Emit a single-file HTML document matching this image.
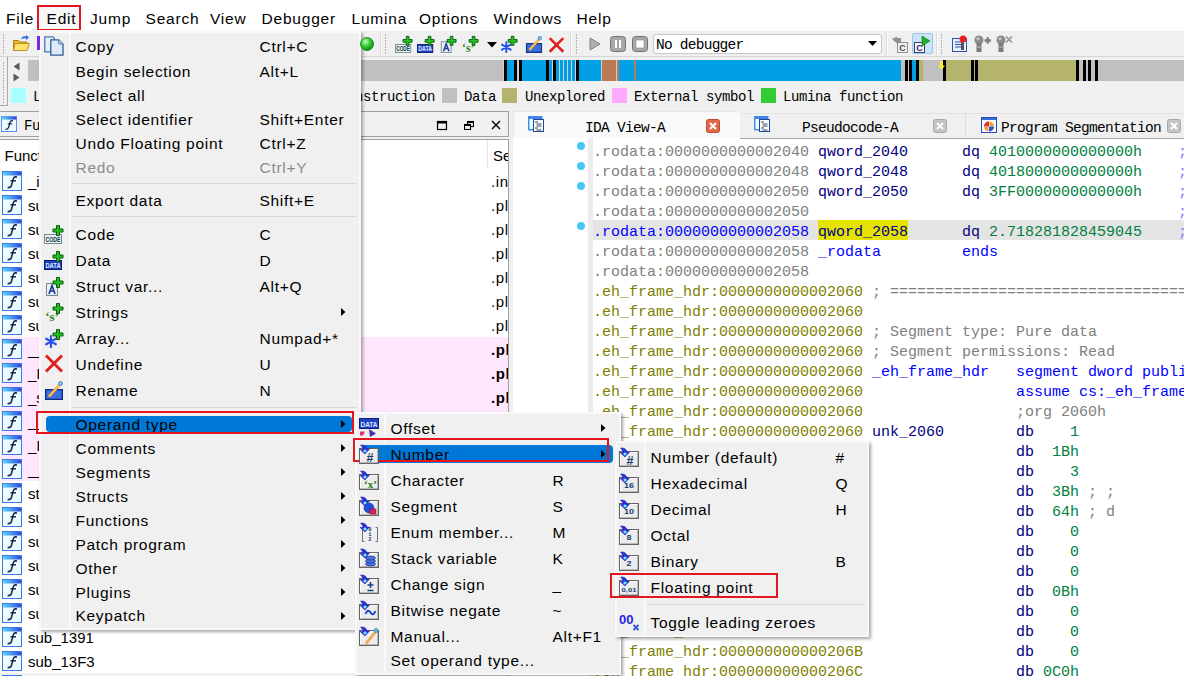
<!DOCTYPE html>
<html><head><meta charset="utf-8"><style>
html,body{margin:0;padding:0;}
body{width:1184px;height:676px;overflow:hidden;position:relative;background:#f0f0f0;font-family:'Liberation Sans', sans-serif;}
.t{position:absolute;white-space:pre;}
.r{position:absolute;}
</style></head><body>
<svg width="0" height="0" style="position:absolute"><defs><linearGradient id="fg" x1="0" y1="0" x2="1" y2="0"><stop offset="0" stop-color="#5fd8f8"/><stop offset="1" stop-color="#3048d8"/></linearGradient>
<symbol id="fn" viewBox="0 0 20 20"><rect x="0.5" y="0.5" width="19" height="19" fill="#eafcff" stroke="#3a7ae6"/><rect x="1" y="1" width="18" height="3.5" fill="url(#fg)"/>
<path d="M15 6.2 C13 5.4 11.8 6 11.2 8.2 L9.4 14.6 C8.9 16.3 8 16.8 5.6 16.6" stroke="#1c2448" stroke-width="1.6" fill="none"/><path d="M8.4 9.8 H14" stroke="#1c2448" stroke-width="1.4"/></symbol>
<linearGradient id="gball" cx="0.35" cy="0.3" r="0.7"><stop offset="0" stop-color="#aef0a0"/><stop offset="1" stop-color="#10a010"/></linearGradient>
<radialGradient id="rball" cx="0.38" cy="0.32" r="0.7"><stop offset="0" stop-color="#c8ffc0"/><stop offset="0.45" stop-color="#40d040"/><stop offset="1" stop-color="#089008"/></radialGradient>
<symbol id="plus" viewBox="0 0 20 20"><path d="M12.5 1.5h3v3.5h3.5v3h-3.5v3.5h-3v-3.5h-3.5v-3h3.5z" fill="#22c022" stroke="#0a5a0a" stroke-width="1"/></symbol>
<symbol id="i_copy" viewBox="0 0 20 20"><path d="M0.8 0.8h8l1.5 1.5v13.5h-9.5z" fill="#e6f0fa" stroke="#4a78b0" stroke-width="1.3"/><path d="M6.8 3.8h8l4.2 4.2v11.2h-12.2z" fill="#dfeaf8" stroke="#2e5e9c" stroke-width="1.3"/><path d="M14.8 3.8v4.2h4.2" fill="#c8d8ec" stroke="#2e5e9c" stroke-width="0.8"/></symbol>
<symbol id="i_code" viewBox="0 0 20 20"><rect x="0.5" y="10.5" width="17" height="9" fill="#e8eef4" stroke="#7a8890"/><text x="9" y="18.3" font-family="'Liberation Sans'" font-size="7.5" font-weight="bold" fill="#0a3a48" text-anchor="middle" textLength="15" lengthAdjust="spacingAndGlyphs">CODE</text><use href="#plus"/></symbol>
<symbol id="i_data" viewBox="0 0 20 20"><rect x="0.5" y="10.5" width="17" height="9" fill="#1840c0" stroke="#0a1a70"/><text x="9" y="18.3" font-family="'Liberation Sans'" font-size="7.5" font-weight="bold" fill="#e0f0ff" text-anchor="middle" textLength="15" lengthAdjust="spacingAndGlyphs">DATA</text><use href="#plus"/></symbol>
<symbol id="i_struct" viewBox="0 0 20 20"><rect x="2.5" y="7.5" width="11" height="12" fill="#e8eef6" stroke="#7a8896"/><path d="M5 18 L8 9.5 L11 18 M6 15h4" stroke="#1a3c90" stroke-width="1.6" fill="none"/><use href="#plus"/></symbol>
<symbol id="i_str" viewBox="0 0 20 20"><text x="8" y="19" font-family="'Liberation Serif'" font-size="13" font-weight="bold" fill="#2e8a1a" text-anchor="middle">‘s’</text><use href="#plus"/></symbol>
<symbol id="i_arr" viewBox="0 0 20 20"><g stroke="#2850e8" stroke-width="2.2" stroke-linecap="round"><path d="M7 8v11M2.2 10.7l9.6 5.6M2.2 16.3l9.6-5.6"/></g><use href="#plus"/></symbol>
<symbol id="i_undef" viewBox="0 0 20 20"><path d="M2 2.5 L18 18.5 M18 2.5 L2 18.5" stroke="#e02020" stroke-width="3"/></symbol>
<symbol id="i_ren" viewBox="0 0 20 20"><rect x="1.5" y="9.5" width="17" height="10" fill="#2858c8" stroke="#0a2a80"/><rect x="3" y="11" width="14" height="7" fill="#3a70e0"/><path d="M5 16.5 L15.5 5" stroke="#f0a030" stroke-width="2.8"/><path d="M5 16.5 L15.5 5" stroke="#ffe080" stroke-width="1"/><circle cx="16.5" cy="3.5" r="2" fill="#7ac0f0" stroke="#3a80c0" stroke-width="0.8"/></symbol>
<symbol id="barr" viewBox="0 0 20 20"><path d="M1.5 1 C5 0.5 7.5 2 8 5 L10.5 5 L6 10 L1 5.5 L4 5.5 C3.8 3.8 3 2.5 1.5 1z" fill="#2a30e0" stroke="#1818a0" stroke-width="0.5"/><path d="M6 5.5 L6 8.5 M4.5 7 L7.5 7" stroke="#70ffff" stroke-width="1.3"/></symbol>
<symbol id="box" viewBox="0 0 20 20"><rect x="0.7" y="4.7" width="18.6" height="14.6" fill="#ececec" stroke="#5e5e5e" stroke-width="1.3"/><path d="M1.5 18.5V5.5H18.5" stroke="#fcfcfc" fill="none" stroke-width="1"/></symbol>
<symbol id="o_offset" viewBox="0 0 20 20"><rect x="0.5" y="0.5" width="19" height="10" fill="#2040c0" stroke="#102080"/><text x="10" y="8.8" font-family="'Liberation Sans'" font-size="8" font-weight="bold" fill="#d8e8ff" text-anchor="middle" textLength="17" lengthAdjust="spacingAndGlyphs">DATA</text><path d="M1 13.5h5l-2 4h-3z" fill="#e03070"/><path d="M10 11 L17 15.5 L11 19z" fill="#4030b0"/></symbol>
<symbol id="o_num" viewBox="0 0 20 20"><use href="#box"/><text x="11" y="17.5" font-family="Liberation Sans" font-size="12.5" font-weight="bold" fill="#1a3a6a" text-anchor="middle">#</text><use href="#barr"/></symbol>
<symbol id="o_chr" viewBox="0 0 20 20"><use href="#box"/><text x="11.5" y="18" font-family="'Liberation Serif'" font-size="11" font-weight="bold" fill="#1a7a1a" text-anchor="middle">‘x’</text><use href="#barr"/></symbol>
<symbol id="o_seg" viewBox="0 0 20 20"><use href="#box"/><circle cx="10" cy="12" r="5" fill="#2050d8" stroke="#102a90" stroke-width="0.6"/><rect x="11" y="13" width="6" height="5" fill="#e02060" stroke="#901030" stroke-width="0.6"/><use href="#barr"/></symbol>
<symbol id="o_enum" viewBox="0 0 20 20"><path d="M5.5 5.5h-2v14h2M16.5 5.5h2v14h-2" fill="none" stroke="#707070"/><text x="11" y="9" font-family="'Liberation Mono'" font-size="5.5" font-weight="bold" fill="#203a70" text-anchor="middle">0</text><text x="11" y="14" font-family="'Liberation Mono'" font-size="5.5" font-weight="bold" fill="#203a70" text-anchor="middle">1</text><text x="11" y="19" font-family="'Liberation Mono'" font-size="5.5" font-weight="bold" fill="#203a70" text-anchor="middle">2</text><use href="#barr"/></symbol>
<symbol id="o_stack" viewBox="0 0 20 20"><use href="#box"/><g fill="#4a70e0" stroke="#1a3090" stroke-width="0.7"><ellipse cx="11.5" cy="16" rx="5" ry="2"/><ellipse cx="11.5" cy="13" rx="5" ry="2"/><ellipse cx="11.5" cy="10" rx="5" ry="2"/></g><use href="#barr"/></symbol>
<symbol id="o_sign" viewBox="0 0 20 20"><use href="#box"/><path d="M11.5 8v6M8.5 11h6M8.5 16.5h6" stroke="#1a3a8a" stroke-width="1.5"/><use href="#barr"/></symbol>
<symbol id="o_neg" viewBox="0 0 20 20"><use href="#box"/><path d="M6.5 14 C8 10 10 10 11.5 12.5 C13 15 15 15 16.5 11" stroke="#2040d0" stroke-width="2" fill="none"/><use href="#barr"/></symbol>
<symbol id="o_man" viewBox="0 0 20 20"><use href="#box"/><path d="M7 17.5 L16.5 6" stroke="#e89030" stroke-width="2.6"/><path d="M7 17.5 L16.5 6" stroke="#ffd080" stroke-width="0.9"/><circle cx="17" cy="4.5" r="2" fill="#6ab8e8" stroke="#3a80c0" stroke-width="0.7"/><use href="#barr"/></symbol>
<symbol id="n_16" viewBox="0 0 20 20"><use href="#box"/><text x="10" y="15" font-family="Liberation Sans" font-size="8" font-weight="bold" fill="#123a72" text-anchor="middle" textLength="10" lengthAdjust="spacingAndGlyphs">16</text><use href="#barr"/></symbol>
<symbol id="n_10" viewBox="0 0 20 20"><use href="#box"/><text x="10" y="15" font-family="Liberation Sans" font-size="8" font-weight="bold" fill="#123a72" text-anchor="middle" textLength="10" lengthAdjust="spacingAndGlyphs">10</text><use href="#barr"/></symbol>
<symbol id="n_8" viewBox="0 0 20 20"><use href="#box"/><text x="10" y="15" font-family="Liberation Sans" font-size="7" font-weight="bold" fill="#123a72" text-anchor="middle" textLength="5" lengthAdjust="spacingAndGlyphs">8</text><use href="#barr"/></symbol>
<symbol id="n_2" viewBox="0 0 20 20"><use href="#box"/><text x="10" y="15" font-family="Liberation Sans" font-size="7" font-weight="bold" fill="#123a72" text-anchor="middle" textLength="5" lengthAdjust="spacingAndGlyphs">2</text><use href="#barr"/></symbol>
<symbol id="n_fl" viewBox="0 0 20 20"><use href="#box"/><text x="10" y="15.5" font-family="Liberation Sans" font-size="6" font-weight="bold" fill="#123a72" text-anchor="middle" textLength="15" lengthAdjust="spacingAndGlyphs">0,01</text><use href="#barr"/></symbol>
<symbol id="n_tog" viewBox="0 0 20 20"><text x="0" y="11.5" font-family="Liberation Sans" font-size="12.5" font-weight="bold" fill="#2828e0" textLength="14.5" lengthAdjust="spacingAndGlyphs">00</text><path d="M14.5 13l5 5M19.5 13l-5 5" stroke="#3a50e0" stroke-width="1.8"/></symbol>
<symbol id="tabicon" viewBox="0 0 16 16"><rect x="0.7" y="0.7" width="13" height="13" fill="#e8fcff" stroke="#3a8ae8" stroke-width="1.4"/><rect x="1" y="1" width="12.5" height="2" fill="#4a80e8"/><rect x="5.5" y="3.5" width="10" height="12" fill="#f8fbff" stroke="#1a4a90"/><path d="M7 6h3M8.5 8h5M8.5 10h5M7 12h3M8.5 14h5" stroke="#404850" stroke-width="1"/></symbol>
<symbol id="segicon" viewBox="0 0 16 16"><rect x="0.5" y="0.5" width="15" height="15" fill="#f8f8ff" stroke="#2a4ac0"/><rect x="1" y="1" width="14" height="2" fill="#3a6ad8"/><circle cx="8" cy="9.5" r="5" fill="#f0a020"/><path d="M8 4.5v10M3 9.5h10" stroke="#fff" stroke-width="1.2"/><path d="M8 4.5 A5 5 0 0 0 3 9.5 H8z" fill="#e03030"/><path d="M8 14.5 A5 5 0 0 0 13 9.5 H8z" fill="#3050d0"/></symbol>
</defs></svg>
<div class="r" style="left:0px;top:0px;width:1184px;height:30px;background:#ffffff;"></div><div class="r" style="left:37px;top:5px;width:44px;height:25.5px;background:#f7f7f7;box-sizing:border-box;border:2px solid #e3151e;"></div><div class="t" style="left:6px;top:7.83px;font-size:15.5px;line-height:22px;color:#000;font-family:'Liberation Sans', sans-serif;letter-spacing:0.8px;">File</div><div class="t" style="left:46.5px;top:7.83px;font-size:15.5px;line-height:22px;color:#000;font-family:'Liberation Sans', sans-serif;letter-spacing:0.8px;">Edit</div><div class="t" style="left:90px;top:7.83px;font-size:15.5px;line-height:22px;color:#000;font-family:'Liberation Sans', sans-serif;letter-spacing:0.8px;">Jump</div><div class="t" style="left:145.5px;top:7.83px;font-size:15.5px;line-height:22px;color:#000;font-family:'Liberation Sans', sans-serif;letter-spacing:0.8px;">Search</div><div class="t" style="left:210px;top:7.83px;font-size:15.5px;line-height:22px;color:#000;font-family:'Liberation Sans', sans-serif;letter-spacing:0.8px;">View</div><div class="t" style="left:261.5px;top:7.83px;font-size:15.5px;line-height:22px;color:#000;font-family:'Liberation Sans', sans-serif;letter-spacing:0.8px;">Debugger</div><div class="t" style="left:351.5px;top:7.83px;font-size:15.5px;line-height:22px;color:#000;font-family:'Liberation Sans', sans-serif;letter-spacing:0.8px;">Lumina</div><div class="t" style="left:419px;top:7.83px;font-size:15.5px;line-height:22px;color:#000;font-family:'Liberation Sans', sans-serif;letter-spacing:0.8px;">Options</div><div class="t" style="left:493.5px;top:7.83px;font-size:15.5px;line-height:22px;color:#000;font-family:'Liberation Sans', sans-serif;letter-spacing:0.8px;">Windows</div><div class="t" style="left:576.5px;top:7.83px;font-size:15.5px;line-height:22px;color:#000;font-family:'Liberation Sans', sans-serif;letter-spacing:0.8px;">Help</div><div class="r" style="left:0px;top:30px;width:1184px;height:27px;background:#f0f0f0;box-sizing:border-box;border-top:1px solid #fbfbfb;border-bottom:1px solid #d9d9d9;"></div><div class="r" style="left:0px;top:57px;width:1184px;height:49px;background:#f0f0f0;"></div><div class="r" style="left:0px;top:57px;width:8px;height:49px;background:#f0f0f0;box-sizing:border-box;border-right:1px solid #a8a8a8;border-bottom:1px solid #a8a8a8;"></div><div class="r" style="left:0px;top:56px;width:1184px;height:1px;background:#d4d4d4;"></div><div class="r" style="left:2.5px;top:62px;width:1.2px;height:1.5px;background:#b4b4b4;"></div><div class="r" style="left:2.5px;top:65px;width:1.2px;height:1.5px;background:#b4b4b4;"></div><div class="r" style="left:2.5px;top:68px;width:1.2px;height:1.5px;background:#b4b4b4;"></div><div class="r" style="left:2.5px;top:71px;width:1.2px;height:1.5px;background:#b4b4b4;"></div><div class="r" style="left:2.5px;top:74px;width:1.2px;height:1.5px;background:#b4b4b4;"></div><div class="r" style="left:2.5px;top:77px;width:1.2px;height:1.5px;background:#b4b4b4;"></div><div class="r" style="left:2.5px;top:80px;width:1.2px;height:1.5px;background:#b4b4b4;"></div><div class="r" style="left:2.5px;top:83px;width:1.2px;height:1.5px;background:#b4b4b4;"></div><div class="r" style="left:2.5px;top:86px;width:1.2px;height:1.5px;background:#b4b4b4;"></div><div class="r" style="left:2.5px;top:89px;width:1.2px;height:1.5px;background:#b4b4b4;"></div><div class="r" style="left:2.5px;top:92px;width:1.2px;height:1.5px;background:#b4b4b4;"></div><div class="r" style="left:2.5px;top:95px;width:1.2px;height:1.5px;background:#b4b4b4;"></div><div class="r" style="left:2.5px;top:98px;width:1.2px;height:1.5px;background:#b4b4b4;"></div><div class="r" style="left:2.5px;top:101px;width:1.2px;height:1.5px;background:#b4b4b4;"></div><svg class="r" style="left:13px;top:62px;" width="7" height="9" viewBox="0 0 7 9"><path d="M6.5 0.5 L0.5 4.5 L6.5 8.5z" fill="#5a5a5a"/></svg><svg class="r" style="left:13px;top:72.5px;" width="7" height="9" viewBox="0 0 7 9"><path d="M0.5 0.5 L6.5 4.5 L0.5 8.5z" fill="#5a5a5a"/></svg><div class="r" style="left:28px;top:60px;width:475px;height:21px;background:#c0c0c0;"></div><div class="r" style="left:503px;top:60px;width:1px;height:21px;background:#d0d0d0;"></div><div class="r" style="left:504px;top:60px;width:3px;height:21px;background:#000;"></div><div class="r" style="left:507px;top:60px;width:7px;height:21px;background:#00a0e6;"></div><div class="r" style="left:514px;top:60px;width:3px;height:21px;background:#000;"></div><div class="r" style="left:517px;top:60px;width:2px;height:21px;background:#d0d0d0;"></div><div class="r" style="left:519px;top:60px;width:3px;height:21px;background:#000;"></div><div class="r" style="left:522px;top:60px;width:24px;height:21px;background:#00a0e6;"></div><div class="r" style="left:546px;top:60px;width:3px;height:21px;background:#000;"></div><div class="r" style="left:549px;top:60px;width:3px;height:21px;background:#00a0e6;"></div><div class="r" style="left:552px;top:60px;width:1px;height:21px;background:#d0d0d0;"></div><div class="r" style="left:553px;top:60px;width:3px;height:21px;background:#000;"></div><div class="r" style="left:556px;top:60px;width:3px;height:21px;background:#00a0e6;"></div><div class="r" style="left:559px;top:60px;width:1px;height:21px;background:#d0d0d0;"></div><div class="r" style="left:560px;top:60px;width:3px;height:21px;background:#00a0e6;"></div><div class="r" style="left:563px;top:60px;width:1px;height:21px;background:#d0d0d0;"></div><div class="r" style="left:564px;top:60px;width:3px;height:21px;background:#00a0e6;"></div><div class="r" style="left:567px;top:60px;width:1px;height:21px;background:#d0d0d0;"></div><div class="r" style="left:568px;top:60px;width:3px;height:21px;background:#00a0e6;"></div><div class="r" style="left:571px;top:60px;width:1px;height:21px;background:#d0d0d0;"></div><div class="r" style="left:572px;top:60px;width:3px;height:21px;background:#00a0e6;"></div><div class="r" style="left:575px;top:60px;width:1px;height:21px;background:#d0d0d0;"></div><div class="r" style="left:576px;top:60px;width:3px;height:21px;background:#000;"></div><div class="r" style="left:579px;top:60px;width:22px;height:21px;background:#00a0e6;"></div><div class="r" style="left:601px;top:60px;width:1px;height:21px;background:#d0d0d0;"></div><div class="r" style="left:602px;top:60px;width:14px;height:21px;background:#b87a57;"></div><div class="r" style="left:616px;top:60px;width:1px;height:21px;background:#d0d0d0;"></div><div class="r" style="left:617px;top:60px;width:2px;height:21px;background:#b87a57;"></div><div class="r" style="left:619px;top:60px;width:15px;height:21px;background:#00a0e6;"></div><div class="r" style="left:634px;top:60px;width:2px;height:21px;background:#b87a57;"></div><div class="r" style="left:636px;top:60px;width:265px;height:21px;background:#00a0e6;"></div><div class="r" style="left:901px;top:60px;width:4px;height:21px;background:#c0c0c0;"></div><div class="r" style="left:905px;top:60px;width:3px;height:21px;background:#000;"></div><div class="r" style="left:908px;top:60px;width:1px;height:21px;background:#c0c0c0;"></div><div class="r" style="left:909px;top:60px;width:3px;height:21px;background:#000;"></div><div class="r" style="left:912px;top:60px;width:4px;height:21px;background:#00a0e6;"></div><div class="r" style="left:916px;top:60px;width:3px;height:21px;background:#000;"></div><div class="r" style="left:919px;top:60px;width:4px;height:21px;background:#b4b46c;"></div><div class="r" style="left:923px;top:60px;width:20px;height:21px;background:#c0c0c0;"></div><div class="r" style="left:943px;top:60px;width:3px;height:21px;background:#000;"></div><div class="r" style="left:946px;top:60px;width:25px;height:21px;background:#b4b46c;"></div><div class="r" style="left:971px;top:60px;width:3px;height:21px;background:#000;"></div><div class="r" style="left:974px;top:60px;width:1px;height:21px;background:#b4b46c;"></div><div class="r" style="left:975px;top:60px;width:3px;height:21px;background:#000;"></div><div class="r" style="left:978px;top:60px;width:98px;height:21px;background:#b4b46c;"></div><div class="r" style="left:1076px;top:60px;width:3px;height:21px;background:#000;"></div><div class="r" style="left:1079px;top:60px;width:4px;height:21px;background:#c0c0c0;"></div><div class="r" style="left:1083px;top:60px;width:3px;height:21px;background:#000;"></div><div class="r" style="left:1086px;top:60px;width:2px;height:21px;background:#c0c0c0;"></div><div class="r" style="left:1088px;top:60px;width:3px;height:21px;background:#000;"></div><div class="r" style="left:1091px;top:60px;width:4px;height:21px;background:#c0c0c0;"></div><div class="r" style="left:1095px;top:60px;width:3px;height:21px;background:#000;"></div><div class="r" style="left:1098px;top:60px;width:86px;height:21px;background:#c0c0c0;"></div><svg class="r" style="left:938px;top:61px;" width="7" height="9" viewBox="0 0 7 9"><path d="M2 0h3v4.5h2l-3.5 4.5l-3.5-4.5h2z" fill="#f8f040"/></svg><div class="r" style="left:11px;top:88px;width:15px;height:15px;background:#a8ffff;"></div><div class="r" style="left:442px;top:88px;width:15px;height:15px;background:#c0c0c0;"></div><div class="r" style="left:502px;top:88px;width:15px;height:15px;background:#b4b46c;"></div><div class="r" style="left:612px;top:88px;width:15px;height:15px;background:#ffaaff;"></div><div class="r" style="left:761px;top:88px;width:15px;height:15px;background:#33cc33;"></div><div class="t" style="left:33px;top:86.77px;font-size:14px;line-height:20px;color:#000;font-family:'Liberation Mono', monospace;letter-spacing:-0.4px;">Library function</div><div class="t" style="left:347px;top:86.77px;font-size:14px;line-height:20px;color:#000;font-family:'Liberation Mono', monospace;letter-spacing:-0.4px;">Instruction</div><div class="t" style="left:464px;top:86.77px;font-size:14px;line-height:20px;color:#000;font-family:'Liberation Mono', monospace;letter-spacing:-0.4px;">Data</div><div class="t" style="left:525px;top:86.77px;font-size:14px;line-height:20px;color:#000;font-family:'Liberation Mono', monospace;letter-spacing:-0.4px;">Unexplored</div><div class="t" style="left:634px;top:86.77px;font-size:14px;line-height:20px;color:#000;font-family:'Liberation Mono', monospace;letter-spacing:-0.4px;">External symbol</div><div class="t" style="left:783px;top:86.77px;font-size:14px;line-height:20px;color:#000;font-family:'Liberation Mono', monospace;letter-spacing:-0.4px;">Lumina function</div><div class="r" style="left:0px;top:111px;width:509px;height:26px;background:#f0f0f0;box-sizing:border-box;border-top:1px solid #a0a0a0;border-bottom:1px solid #a0a0a0;border-right:1px solid #a0a0a0;"></div><div class="t" style="left:24px;top:116.27px;font-size:14px;line-height:20px;color:#000;font-family:'Liberation Mono', monospace;letter-spacing:-0.4px;">Functions</div><div class="r" style="left:0px;top:139px;width:509px;height:537px;background:#ffffff;box-sizing:border-box;border-top:1px solid #a0a0a0;border-right:1px solid #a0a0a0;"></div><div class="t" style="left:4.5px;top:145.30px;font-size:15px;line-height:21px;color:#000;font-family:'Liberation Sans', sans-serif;">Function name</div><div class="r" style="left:487px;top:140px;width:1px;height:28px;background:#e5e5e5;"></div><div class="t" style="left:493px;top:145.30px;font-size:15px;line-height:21px;color:#000;font-family:'Liberation Sans', sans-serif;">Segment</div><div class="r" style="left:509px;top:111px;width:4px;height:565px;background:#f0f0f0;"></div><div class="r" style="left:0;top:0;width:1184px;height:676px;clip-path:inset(140px 676px 0px 1px);"><svg class="r" style="left:2px;top:171px;" width="20" height="20" viewBox="0 0 20 20"><use href="#fn"/></svg><div class="t" style="left:28px;top:171.30px;font-size:15px;line-height:21px;color:#000;font-family:'Liberation Sans', sans-serif;">_init_proc</div><div class="t" style="left:491px;top:171.30px;font-size:15px;line-height:21px;color:#000;font-family:'Liberation Sans', sans-serif;letter-spacing:0.6px;">.init</div><svg class="r" style="left:2px;top:195px;" width="20" height="20" viewBox="0 0 20 20"><use href="#fn"/></svg><div class="t" style="left:28px;top:195.30px;font-size:15px;line-height:21px;color:#000;font-family:'Liberation Sans', sans-serif;">sub_1020</div><div class="t" style="left:491px;top:195.30px;font-size:15px;line-height:21px;color:#000;font-family:'Liberation Sans', sans-serif;letter-spacing:0.6px;">.plt</div><svg class="r" style="left:2px;top:219px;" width="20" height="20" viewBox="0 0 20 20"><use href="#fn"/></svg><div class="t" style="left:28px;top:219.30px;font-size:15px;line-height:21px;color:#000;font-family:'Liberation Sans', sans-serif;">sub_1030</div><div class="t" style="left:491px;top:219.30px;font-size:15px;line-height:21px;color:#000;font-family:'Liberation Sans', sans-serif;letter-spacing:0.6px;">.plt</div><svg class="r" style="left:2px;top:243px;" width="20" height="20" viewBox="0 0 20 20"><use href="#fn"/></svg><div class="t" style="left:28px;top:243.30px;font-size:15px;line-height:21px;color:#000;font-family:'Liberation Sans', sans-serif;">sub_1040</div><div class="t" style="left:491px;top:243.30px;font-size:15px;line-height:21px;color:#000;font-family:'Liberation Sans', sans-serif;letter-spacing:0.6px;">.plt</div><svg class="r" style="left:2px;top:267px;" width="20" height="20" viewBox="0 0 20 20"><use href="#fn"/></svg><div class="t" style="left:28px;top:267.30px;font-size:15px;line-height:21px;color:#000;font-family:'Liberation Sans', sans-serif;">sub_1050</div><div class="t" style="left:491px;top:267.30px;font-size:15px;line-height:21px;color:#000;font-family:'Liberation Sans', sans-serif;letter-spacing:0.6px;">.plt</div><svg class="r" style="left:2px;top:291px;" width="20" height="20" viewBox="0 0 20 20"><use href="#fn"/></svg><div class="t" style="left:28px;top:291.30px;font-size:15px;line-height:21px;color:#000;font-family:'Liberation Sans', sans-serif;">sub_1060</div><div class="t" style="left:491px;top:291.30px;font-size:15px;line-height:21px;color:#000;font-family:'Liberation Sans', sans-serif;letter-spacing:0.6px;">.plt</div><svg class="r" style="left:2px;top:315px;" width="20" height="20" viewBox="0 0 20 20"><use href="#fn"/></svg><div class="t" style="left:28px;top:315.30px;font-size:15px;line-height:21px;color:#000;font-family:'Liberation Sans', sans-serif;">sub_1070</div><div class="t" style="left:491px;top:315.30px;font-size:15px;line-height:21px;color:#000;font-family:'Liberation Sans', sans-serif;letter-spacing:0.6px;">.plt</div><div class="r" style="left:1px;top:337px;width:507px;height:24px;background:#ffe6ff;"></div><svg class="r" style="left:2px;top:339px;" width="20" height="20" viewBox="0 0 20 20"><use href="#fn"/></svg><div class="t" style="left:28px;top:339.30px;font-size:15px;line-height:21px;color:#000;font-family:'Liberation Sans', sans-serif;">__cxa_finalize</div><div class="t" style="left:491px;top:339.30px;font-size:15px;line-height:21px;color:#000;font-family:'Liberation Sans', sans-serif;letter-spacing:0.6px;font-weight:bold;">.plt.got</div><div class="r" style="left:1px;top:361px;width:507px;height:24px;background:#ffe6ff;"></div><svg class="r" style="left:2px;top:363px;" width="20" height="20" viewBox="0 0 20 20"><use href="#fn"/></svg><div class="t" style="left:28px;top:363.30px;font-size:15px;line-height:21px;color:#000;font-family:'Liberation Sans', sans-serif;">_ITM_deregisterTMCloneTable</div><div class="t" style="left:491px;top:363.30px;font-size:15px;line-height:21px;color:#000;font-family:'Liberation Sans', sans-serif;letter-spacing:0.6px;font-weight:bold;">.plt.got</div><div class="r" style="left:1px;top:385px;width:507px;height:24px;background:#ffe6ff;"></div><svg class="r" style="left:2px;top:387px;" width="20" height="20" viewBox="0 0 20 20"><use href="#fn"/></svg><div class="t" style="left:28px;top:387.30px;font-size:15px;line-height:21px;color:#000;font-family:'Liberation Sans', sans-serif;">_start</div><div class="t" style="left:491px;top:387.30px;font-size:15px;line-height:21px;color:#000;font-family:'Liberation Sans', sans-serif;letter-spacing:0.6px;font-weight:bold;">.plt.got</div><div class="r" style="left:1px;top:409px;width:507px;height:24px;background:#ffe6ff;"></div><svg class="r" style="left:2px;top:411px;" width="20" height="20" viewBox="0 0 20 20"><use href="#fn"/></svg><div class="t" style="left:28px;top:411.30px;font-size:15px;line-height:21px;color:#000;font-family:'Liberation Sans', sans-serif;">__gmon_start__</div><div class="t" style="left:491px;top:411.30px;font-size:15px;line-height:21px;color:#000;font-family:'Liberation Sans', sans-serif;letter-spacing:0.6px;font-weight:bold;">.plt.got</div><div class="r" style="left:1px;top:433px;width:507px;height:24px;background:#ffe6ff;"></div><svg class="r" style="left:2px;top:435px;" width="20" height="20" viewBox="0 0 20 20"><use href="#fn"/></svg><div class="t" style="left:28px;top:435.30px;font-size:15px;line-height:21px;color:#000;font-family:'Liberation Sans', sans-serif;">_ITM_registerTMCloneTable</div><div class="t" style="left:491px;top:435.30px;font-size:15px;line-height:21px;color:#000;font-family:'Liberation Sans', sans-serif;letter-spacing:0.6px;font-weight:bold;">.plt.got</div><div class="r" style="left:1px;top:457px;width:507px;height:24px;background:#ffe6ff;"></div><svg class="r" style="left:2px;top:459px;" width="20" height="20" viewBox="0 0 20 20"><use href="#fn"/></svg><div class="t" style="left:28px;top:459.30px;font-size:15px;line-height:21px;color:#000;font-family:'Liberation Sans', sans-serif;">__libc_start_main</div><div class="t" style="left:491px;top:459.30px;font-size:15px;line-height:21px;color:#000;font-family:'Liberation Sans', sans-serif;letter-spacing:0.6px;font-weight:bold;">.plt.got</div><svg class="r" style="left:2px;top:483px;" width="20" height="20" viewBox="0 0 20 20"><use href="#fn"/></svg><div class="t" style="left:28px;top:483.30px;font-size:15px;line-height:21px;color:#000;font-family:'Liberation Sans', sans-serif;">start</div><div class="t" style="left:491px;top:483.30px;font-size:15px;line-height:21px;color:#000;font-family:'Liberation Sans', sans-serif;letter-spacing:0.6px;">.text</div><svg class="r" style="left:2px;top:507px;" width="20" height="20" viewBox="0 0 20 20"><use href="#fn"/></svg><div class="t" style="left:28px;top:507.30px;font-size:15px;line-height:21px;color:#000;font-family:'Liberation Sans', sans-serif;">sub_1100</div><div class="t" style="left:491px;top:507.30px;font-size:15px;line-height:21px;color:#000;font-family:'Liberation Sans', sans-serif;letter-spacing:0.6px;">.text</div><svg class="r" style="left:2px;top:531px;" width="20" height="20" viewBox="0 0 20 20"><use href="#fn"/></svg><div class="t" style="left:28px;top:531.30px;font-size:15px;line-height:21px;color:#000;font-family:'Liberation Sans', sans-serif;">sub_1130</div><div class="t" style="left:491px;top:531.30px;font-size:15px;line-height:21px;color:#000;font-family:'Liberation Sans', sans-serif;letter-spacing:0.6px;">.text</div><svg class="r" style="left:2px;top:555px;" width="20" height="20" viewBox="0 0 20 20"><use href="#fn"/></svg><div class="t" style="left:28px;top:555.30px;font-size:15px;line-height:21px;color:#000;font-family:'Liberation Sans', sans-serif;">sub_1170</div><div class="t" style="left:491px;top:555.30px;font-size:15px;line-height:21px;color:#000;font-family:'Liberation Sans', sans-serif;letter-spacing:0.6px;">.text</div><svg class="r" style="left:2px;top:579px;" width="20" height="20" viewBox="0 0 20 20"><use href="#fn"/></svg><div class="t" style="left:28px;top:579.30px;font-size:15px;line-height:21px;color:#000;font-family:'Liberation Sans', sans-serif;">sub_11C0</div><div class="t" style="left:491px;top:579.30px;font-size:15px;line-height:21px;color:#000;font-family:'Liberation Sans', sans-serif;letter-spacing:0.6px;">.text</div><svg class="r" style="left:2px;top:603px;" width="20" height="20" viewBox="0 0 20 20"><use href="#fn"/></svg><div class="t" style="left:28px;top:603.30px;font-size:15px;line-height:21px;color:#000;font-family:'Liberation Sans', sans-serif;">sub_1249</div><div class="t" style="left:491px;top:603.30px;font-size:15px;line-height:21px;color:#000;font-family:'Liberation Sans', sans-serif;letter-spacing:0.6px;">.text</div><svg class="r" style="left:2px;top:627px;" width="20" height="20" viewBox="0 0 20 20"><use href="#fn"/></svg><div class="t" style="left:28px;top:627.30px;font-size:15px;line-height:21px;color:#000;font-family:'Liberation Sans', sans-serif;">sub_1391</div><div class="t" style="left:491px;top:627.30px;font-size:15px;line-height:21px;color:#000;font-family:'Liberation Sans', sans-serif;letter-spacing:0.6px;">.text</div><svg class="r" style="left:2px;top:651px;" width="20" height="20" viewBox="0 0 20 20"><use href="#fn"/></svg><div class="t" style="left:28px;top:651.30px;font-size:15px;line-height:21px;color:#000;font-family:'Liberation Sans', sans-serif;">sub_13F3</div><div class="t" style="left:491px;top:651.30px;font-size:15px;line-height:21px;color:#000;font-family:'Liberation Sans', sans-serif;letter-spacing:0.6px;">.text</div><div class="r" style="left:1px;top:673px;width:507px;height:24px;background:#f0f0f0;"></div><svg class="r" style="left:2px;top:675px;" width="20" height="20" viewBox="0 0 20 20"><use href="#fn"/></svg><div class="t" style="left:28px;top:675.30px;font-size:15px;line-height:21px;color:#000;font-family:'Liberation Sans', sans-serif;">sub_1450</div><div class="t" style="left:491px;top:675.30px;font-size:15px;line-height:21px;color:#000;font-family:'Liberation Sans', sans-serif;letter-spacing:0.6px;">.text</div></div><div class="r" style="left:508px;top:139px;width:1px;height:537px;background:#a0a0a0;"></div><div class="r" style="left:513px;top:111px;width:671px;height:27px;background:#f0f0f0;"></div><div class="r" style="left:513px;top:138px;width:671px;height:538px;background:#ffffff;"></div><div class="r" style="left:588px;top:138px;width:5px;height:538px;background:#ececec;"></div><div class="r" style="left:0;top:0;width:1184px;height:676px;clip-path:inset(138px 0px 0px 593px);"><div class="r" style="left:593px;top:220px;width:591px;height:20px;background:#e4e4e4;"></div><div class="r" style="left:818.0px;top:220px;width:90px;height:20px;background:#e4e400;"></div><div class="t" style="left:593.0px;top:141.51px;font-size:15px;line-height:21px;color:#808080;font-family:'Liberation Mono', monospace;">.rodata:0000000000002040</div><div class="t" style="left:593.0px;top:161.51px;font-size:15px;line-height:21px;color:#808080;font-family:'Liberation Mono', monospace;">.rodata:0000000000002048</div><div class="t" style="left:593.0px;top:181.51px;font-size:15px;line-height:21px;color:#808080;font-family:'Liberation Mono', monospace;">.rodata:0000000000002050</div><div class="t" style="left:593.0px;top:201.51px;font-size:15px;line-height:21px;color:#808080;font-family:'Liberation Mono', monospace;">.rodata:0000000000002050</div><div class="t" style="left:593.0px;top:221.51px;font-size:15px;line-height:21px;color:#0000ff;font-family:'Liberation Mono', monospace;">.rodata:0000000000002058</div><div class="t" style="left:593.0px;top:241.51px;font-size:15px;line-height:21px;color:#808080;font-family:'Liberation Mono', monospace;">.rodata:0000000000002058</div><div class="t" style="left:593.0px;top:261.51px;font-size:15px;line-height:21px;color:#808080;font-family:'Liberation Mono', monospace;">.rodata:0000000000002058</div><div class="t" style="left:593.0px;top:281.51px;font-size:15px;line-height:21px;color:#808000;font-family:'Liberation Mono', monospace;">.eh_frame_hdr:0000000000002060</div><div class="t" style="left:593.0px;top:301.51px;font-size:15px;line-height:21px;color:#808000;font-family:'Liberation Mono', monospace;">.eh_frame_hdr:0000000000002060</div><div class="t" style="left:593.0px;top:321.51px;font-size:15px;line-height:21px;color:#808000;font-family:'Liberation Mono', monospace;">.eh_frame_hdr:0000000000002060</div><div class="t" style="left:593.0px;top:341.51px;font-size:15px;line-height:21px;color:#808000;font-family:'Liberation Mono', monospace;">.eh_frame_hdr:0000000000002060</div><div class="t" style="left:593.0px;top:361.51px;font-size:15px;line-height:21px;color:#808000;font-family:'Liberation Mono', monospace;">.eh_frame_hdr:0000000000002060</div><div class="t" style="left:593.0px;top:381.51px;font-size:15px;line-height:21px;color:#808000;font-family:'Liberation Mono', monospace;">.eh_frame_hdr:0000000000002060</div><div class="t" style="left:593.0px;top:401.51px;font-size:15px;line-height:21px;color:#808000;font-family:'Liberation Mono', monospace;">.eh_frame_hdr:0000000000002060</div><div class="t" style="left:593.0px;top:421.51px;font-size:15px;line-height:21px;color:#808000;font-family:'Liberation Mono', monospace;">.eh_frame_hdr:0000000000002060</div><div class="t" style="left:593.0px;top:441.51px;font-size:15px;line-height:21px;color:#808000;font-family:'Liberation Mono', monospace;">.eh_frame_hdr:0000000000002061</div><div class="t" style="left:593.0px;top:461.51px;font-size:15px;line-height:21px;color:#808000;font-family:'Liberation Mono', monospace;">.eh_frame_hdr:0000000000002062</div><div class="t" style="left:593.0px;top:481.51px;font-size:15px;line-height:21px;color:#808000;font-family:'Liberation Mono', monospace;">.eh_frame_hdr:0000000000002063</div><div class="t" style="left:593.0px;top:501.51px;font-size:15px;line-height:21px;color:#808000;font-family:'Liberation Mono', monospace;">.eh_frame_hdr:0000000000002064</div><div class="t" style="left:593.0px;top:521.51px;font-size:15px;line-height:21px;color:#808000;font-family:'Liberation Mono', monospace;">.eh_frame_hdr:0000000000002065</div><div class="t" style="left:593.0px;top:541.51px;font-size:15px;line-height:21px;color:#808000;font-family:'Liberation Mono', monospace;">.eh_frame_hdr:0000000000002066</div><div class="t" style="left:593.0px;top:561.51px;font-size:15px;line-height:21px;color:#808000;font-family:'Liberation Mono', monospace;">.eh_frame_hdr:0000000000002067</div><div class="t" style="left:593.0px;top:581.51px;font-size:15px;line-height:21px;color:#808000;font-family:'Liberation Mono', monospace;">.eh_frame_hdr:0000000000002068</div><div class="t" style="left:593.0px;top:601.51px;font-size:15px;line-height:21px;color:#808000;font-family:'Liberation Mono', monospace;">.eh_frame_hdr:0000000000002069</div><div class="t" style="left:593.0px;top:621.51px;font-size:15px;line-height:21px;color:#808000;font-family:'Liberation Mono', monospace;">.eh_frame_hdr:000000000000206A</div><div class="t" style="left:593.0px;top:641.51px;font-size:15px;line-height:21px;color:#808000;font-family:'Liberation Mono', monospace;">.eh_frame_hdr:000000000000206B</div><div class="t" style="left:593.0px;top:661.51px;font-size:15px;line-height:21px;color:#808000;font-family:'Liberation Mono', monospace;">.eh_frame_hdr:000000000000206C</div><div class="t" style="left:818.0px;top:141.51px;font-size:15px;line-height:21px;color:#000080;font-family:'Liberation Mono', monospace;">qword_2040</div><div class="t" style="left:962.0px;top:141.51px;font-size:15px;line-height:21px;color:#000080;font-family:'Liberation Mono', monospace;">dq</div><div class="t" style="left:989.0px;top:141.51px;font-size:15px;line-height:21px;color:#008040;font-family:'Liberation Mono', monospace;">4010000000000000h</div><div class="t" style="left:1178.0px;top:141.51px;font-size:15px;line-height:21px;color:#8080ff;font-family:'Liberation Mono', monospace;">;</div><div class="t" style="left:818.0px;top:161.51px;font-size:15px;line-height:21px;color:#000080;font-family:'Liberation Mono', monospace;">qword_2048</div><div class="t" style="left:962.0px;top:161.51px;font-size:15px;line-height:21px;color:#000080;font-family:'Liberation Mono', monospace;">dq</div><div class="t" style="left:989.0px;top:161.51px;font-size:15px;line-height:21px;color:#008040;font-family:'Liberation Mono', monospace;">4018000000000000h</div><div class="t" style="left:1178.0px;top:161.51px;font-size:15px;line-height:21px;color:#8080ff;font-family:'Liberation Mono', monospace;">;</div><div class="t" style="left:818.0px;top:181.51px;font-size:15px;line-height:21px;color:#000080;font-family:'Liberation Mono', monospace;">qword_2050</div><div class="t" style="left:962.0px;top:181.51px;font-size:15px;line-height:21px;color:#000080;font-family:'Liberation Mono', monospace;">dq</div><div class="t" style="left:989.0px;top:181.51px;font-size:15px;line-height:21px;color:#008040;font-family:'Liberation Mono', monospace;">3FF0000000000000h</div><div class="t" style="left:1178.0px;top:181.51px;font-size:15px;line-height:21px;color:#8080ff;font-family:'Liberation Mono', monospace;">;</div><div class="t" style="left:1178.0px;top:201.51px;font-size:15px;line-height:21px;color:#8080ff;font-family:'Liberation Mono', monospace;">;</div><div class="t" style="left:818.0px;top:221.51px;font-size:15px;line-height:21px;color:#000080;font-family:'Liberation Mono', monospace;">qword_2058</div><div class="t" style="left:962.0px;top:221.51px;font-size:15px;line-height:21px;color:#000080;font-family:'Liberation Mono', monospace;">dq</div><div class="t" style="left:989.0px;top:221.51px;font-size:15px;line-height:21px;color:#008040;font-family:'Liberation Mono', monospace;">2.718281828459045</div><div class="t" style="left:1178.0px;top:221.51px;font-size:15px;line-height:21px;color:#8080ff;font-family:'Liberation Mono', monospace;">;</div><div class="t" style="left:818.0px;top:241.51px;font-size:15px;line-height:21px;color:#0000ff;font-family:'Liberation Mono', monospace;">_rodata</div><div class="t" style="left:962.0px;top:241.51px;font-size:15px;line-height:21px;color:#0000ff;font-family:'Liberation Mono', monospace;">ends</div><div class="t" style="left:872.0px;top:281.51px;font-size:15px;line-height:21px;color:#808080;font-family:'Liberation Mono', monospace;">; ============================================================</div><div class="t" style="left:872.0px;top:321.51px;font-size:15px;line-height:21px;color:#808080;font-family:'Liberation Mono', monospace;">; Segment type: Pure data</div><div class="t" style="left:872.0px;top:341.51px;font-size:15px;line-height:21px;color:#808080;font-family:'Liberation Mono', monospace;">; Segment permissions: Read</div><div class="t" style="left:872.0px;top:361.51px;font-size:15px;line-height:21px;color:#0000ff;font-family:'Liberation Mono', monospace;">_eh_frame_hdr</div><div class="t" style="left:1016.0px;top:361.51px;font-size:15px;line-height:21px;color:#0000ff;font-family:'Liberation Mono', monospace;">segment dword public</div><div class="t" style="left:1016.0px;top:381.51px;font-size:15px;line-height:21px;color:#0000ff;font-family:'Liberation Mono', monospace;">assume cs:_eh_frame_hdr</div><div class="t" style="left:1016.0px;top:401.51px;font-size:15px;line-height:21px;color:#808080;font-family:'Liberation Mono', monospace;">;org 2060h</div><div class="t" style="left:872.0px;top:421.51px;font-size:15px;line-height:21px;color:#000080;font-family:'Liberation Mono', monospace;">unk_2060</div><div class="t" style="left:1016.0px;top:421.51px;font-size:15px;line-height:21px;color:#000080;font-family:'Liberation Mono', monospace;">db</div><div class="t" style="left:1070.0px;top:421.51px;font-size:15px;line-height:21px;color:#008040;font-family:'Liberation Mono', monospace;">1</div><div class="t" style="left:1016.0px;top:441.51px;font-size:15px;line-height:21px;color:#000080;font-family:'Liberation Mono', monospace;">db</div><div class="t" style="left:1052.0px;top:441.51px;font-size:15px;line-height:21px;color:#008040;font-family:'Liberation Mono', monospace;">1Bh</div><div class="t" style="left:1016.0px;top:461.51px;font-size:15px;line-height:21px;color:#000080;font-family:'Liberation Mono', monospace;">db</div><div class="t" style="left:1070.0px;top:461.51px;font-size:15px;line-height:21px;color:#008040;font-family:'Liberation Mono', monospace;">3</div><div class="t" style="left:1016.0px;top:481.51px;font-size:15px;line-height:21px;color:#000080;font-family:'Liberation Mono', monospace;">db</div><div class="t" style="left:1052.0px;top:481.51px;font-size:15px;line-height:21px;color:#008040;font-family:'Liberation Mono', monospace;">3Bh</div><div class="t" style="left:1016.0px;top:501.51px;font-size:15px;line-height:21px;color:#000080;font-family:'Liberation Mono', monospace;">db</div><div class="t" style="left:1052.0px;top:501.51px;font-size:15px;line-height:21px;color:#008040;font-family:'Liberation Mono', monospace;">64h</div><div class="t" style="left:1016.0px;top:521.51px;font-size:15px;line-height:21px;color:#000080;font-family:'Liberation Mono', monospace;">db</div><div class="t" style="left:1070.0px;top:521.51px;font-size:15px;line-height:21px;color:#008040;font-family:'Liberation Mono', monospace;">0</div><div class="t" style="left:1016.0px;top:541.51px;font-size:15px;line-height:21px;color:#000080;font-family:'Liberation Mono', monospace;">db</div><div class="t" style="left:1070.0px;top:541.51px;font-size:15px;line-height:21px;color:#008040;font-family:'Liberation Mono', monospace;">0</div><div class="t" style="left:1016.0px;top:561.51px;font-size:15px;line-height:21px;color:#000080;font-family:'Liberation Mono', monospace;">db</div><div class="t" style="left:1070.0px;top:561.51px;font-size:15px;line-height:21px;color:#008040;font-family:'Liberation Mono', monospace;">0</div><div class="t" style="left:1016.0px;top:581.51px;font-size:15px;line-height:21px;color:#000080;font-family:'Liberation Mono', monospace;">db</div><div class="t" style="left:1052.0px;top:581.51px;font-size:15px;line-height:21px;color:#008040;font-family:'Liberation Mono', monospace;">0Bh</div><div class="t" style="left:1016.0px;top:601.51px;font-size:15px;line-height:21px;color:#000080;font-family:'Liberation Mono', monospace;">db</div><div class="t" style="left:1070.0px;top:601.51px;font-size:15px;line-height:21px;color:#008040;font-family:'Liberation Mono', monospace;">0</div><div class="t" style="left:1016.0px;top:621.51px;font-size:15px;line-height:21px;color:#000080;font-family:'Liberation Mono', monospace;">db</div><div class="t" style="left:1070.0px;top:621.51px;font-size:15px;line-height:21px;color:#008040;font-family:'Liberation Mono', monospace;">0</div><div class="t" style="left:1016.0px;top:641.51px;font-size:15px;line-height:21px;color:#000080;font-family:'Liberation Mono', monospace;">db</div><div class="t" style="left:1070.0px;top:641.51px;font-size:15px;line-height:21px;color:#008040;font-family:'Liberation Mono', monospace;">0</div><div class="t" style="left:1016.0px;top:661.51px;font-size:15px;line-height:21px;color:#000080;font-family:'Liberation Mono', monospace;">db</div><div class="t" style="left:1043.0px;top:661.51px;font-size:15px;line-height:21px;color:#008040;font-family:'Liberation Mono', monospace;">0C0h</div><div class="t" style="left:1088.0px;top:481.51px;font-size:15px;line-height:21px;color:#808080;font-family:'Liberation Mono', monospace;">; ;</div><div class="t" style="left:1088.0px;top:501.51px;font-size:15px;line-height:21px;color:#808080;font-family:'Liberation Mono', monospace;">; d</div></div><div class="r" style="left:577px;top:142px;width:8px;height:8px;background:#4cc4f4;border-radius:50%;"></div><div class="r" style="left:577px;top:162px;width:8px;height:8px;background:#4cc4f4;border-radius:50%;"></div><div class="r" style="left:577px;top:182px;width:8px;height:8px;background:#4cc4f4;border-radius:50%;"></div><div class="r" style="left:577px;top:222px;width:8px;height:8px;background:#4cc4f4;border-radius:50%;"></div><div class="r" style="left:39px;top:30.5px;width:322px;height:599.0px;background:#f0f0f0;box-sizing:border-box;border:2px solid #f9f9f9;box-shadow:2px 2px 3px rgba(0,0,0,0.35);"></div><div class="r" style="left:69px;top:32.5px;width:2px;height:595.0px;background:#f9f9f9;"></div><div class="r" style="left:72px;top:183px;width:285px;height:1px;background:#d7d7d7;"></div><div class="r" style="left:72px;top:216px;width:285px;height:1px;background:#d7d7d7;"></div><div class="r" style="left:72px;top:407px;width:285px;height:1px;background:#d7d7d7;"></div><div class="r" style="left:46px;top:416px;width:306px;height:16px;background:#0078d7;border-radius:4px;"></div><div class="t" style="left:75.5px;top:35.83px;font-size:15.5px;line-height:22px;color:#000;font-family:'Liberation Sans', sans-serif;letter-spacing:0.7px;">Copy</div><div class="t" style="left:259.5px;top:35.83px;font-size:15.5px;line-height:22px;color:#000;font-family:'Liberation Sans', sans-serif;letter-spacing:0.7px;">Ctrl+C</div><div class="t" style="left:75.5px;top:60.83px;font-size:15.5px;line-height:22px;color:#000;font-family:'Liberation Sans', sans-serif;letter-spacing:0.7px;">Begin selection</div><div class="t" style="left:259.5px;top:60.83px;font-size:15.5px;line-height:22px;color:#000;font-family:'Liberation Sans', sans-serif;letter-spacing:0.7px;">Alt+L</div><div class="t" style="left:75.5px;top:85.13px;font-size:15.5px;line-height:22px;color:#000;font-family:'Liberation Sans', sans-serif;letter-spacing:0.7px;">Select all</div><div class="t" style="left:75.5px;top:108.83px;font-size:15.5px;line-height:22px;color:#000;font-family:'Liberation Sans', sans-serif;letter-spacing:0.7px;">Select identifier</div><div class="t" style="left:259.5px;top:108.83px;font-size:15.5px;line-height:22px;color:#000;font-family:'Liberation Sans', sans-serif;letter-spacing:0.7px;">Shift+Enter</div><div class="t" style="left:75.5px;top:133.03px;font-size:15.5px;line-height:22px;color:#000;font-family:'Liberation Sans', sans-serif;letter-spacing:0.7px;">Undo Floating point</div><div class="t" style="left:259.5px;top:133.03px;font-size:15.5px;line-height:22px;color:#000;font-family:'Liberation Sans', sans-serif;letter-spacing:0.7px;">Ctrl+Z</div><div class="t" style="left:75.5px;top:157.03px;font-size:15.5px;line-height:22px;color:#8c8c8c;font-family:'Liberation Sans', sans-serif;letter-spacing:0.7px;">Redo</div><div class="t" style="left:259.5px;top:157.03px;font-size:15.5px;line-height:22px;color:#8c8c8c;font-family:'Liberation Sans', sans-serif;letter-spacing:0.7px;">Ctrl+Y</div><div class="t" style="left:75.5px;top:190.13px;font-size:15.5px;line-height:22px;color:#000;font-family:'Liberation Sans', sans-serif;letter-spacing:0.7px;">Export data</div><div class="t" style="left:259.5px;top:190.13px;font-size:15.5px;line-height:22px;color:#000;font-family:'Liberation Sans', sans-serif;letter-spacing:0.7px;">Shift+E</div><div class="t" style="left:75.5px;top:224.23px;font-size:15.5px;line-height:22px;color:#000;font-family:'Liberation Sans', sans-serif;letter-spacing:0.7px;">Code</div><div class="t" style="left:259.5px;top:224.23px;font-size:15.5px;line-height:22px;color:#000;font-family:'Liberation Sans', sans-serif;letter-spacing:0.7px;">C</div><div class="t" style="left:75.5px;top:250.03px;font-size:15.5px;line-height:22px;color:#000;font-family:'Liberation Sans', sans-serif;letter-spacing:0.7px;">Data</div><div class="t" style="left:259.5px;top:250.03px;font-size:15.5px;line-height:22px;color:#000;font-family:'Liberation Sans', sans-serif;letter-spacing:0.7px;">D</div><div class="t" style="left:75.5px;top:276.13px;font-size:15.5px;line-height:22px;color:#000;font-family:'Liberation Sans', sans-serif;letter-spacing:0.7px;">Struct var...</div><div class="t" style="left:259.5px;top:276.13px;font-size:15.5px;line-height:22px;color:#000;font-family:'Liberation Sans', sans-serif;letter-spacing:0.7px;">Alt+Q</div><div class="t" style="left:75.5px;top:301.83px;font-size:15.5px;line-height:22px;color:#000;font-family:'Liberation Sans', sans-serif;letter-spacing:0.7px;">Strings</div><svg class="r" style="left:341px;top:308.2px;" width="5" height="8" viewBox="0 0 5 8"><path d="M0 0 L4.5 4 L0 8 Z" fill="#000"/></svg><div class="t" style="left:75.5px;top:327.83px;font-size:15.5px;line-height:22px;color:#000;font-family:'Liberation Sans', sans-serif;letter-spacing:0.7px;">Array...</div><div class="t" style="left:259.5px;top:327.83px;font-size:15.5px;line-height:22px;color:#000;font-family:'Liberation Sans', sans-serif;letter-spacing:0.7px;">Numpad+*</div><div class="t" style="left:75.5px;top:353.53px;font-size:15.5px;line-height:22px;color:#000;font-family:'Liberation Sans', sans-serif;letter-spacing:0.7px;">Undefine</div><div class="t" style="left:259.5px;top:353.53px;font-size:15.5px;line-height:22px;color:#000;font-family:'Liberation Sans', sans-serif;letter-spacing:0.7px;">U</div><div class="t" style="left:75.5px;top:379.63px;font-size:15.5px;line-height:22px;color:#000;font-family:'Liberation Sans', sans-serif;letter-spacing:0.7px;">Rename</div><div class="t" style="left:259.5px;top:379.63px;font-size:15.5px;line-height:22px;color:#000;font-family:'Liberation Sans', sans-serif;letter-spacing:0.7px;">N</div><div class="t" style="left:75.5px;top:413.63px;font-size:15.5px;line-height:22px;color:#000;font-family:'Liberation Sans', sans-serif;letter-spacing:0.7px;">Operand type</div><svg class="r" style="left:341px;top:420.0px;" width="5" height="8" viewBox="0 0 5 8"><path d="M0 0 L4.5 4 L0 8 Z" fill="#000"/></svg><div class="t" style="left:75.5px;top:437.73px;font-size:15.5px;line-height:22px;color:#000;font-family:'Liberation Sans', sans-serif;letter-spacing:0.7px;">Comments</div><svg class="r" style="left:341px;top:444.1px;" width="5" height="8" viewBox="0 0 5 8"><path d="M0 0 L4.5 4 L0 8 Z" fill="#000"/></svg><div class="t" style="left:75.5px;top:461.53px;font-size:15.5px;line-height:22px;color:#000;font-family:'Liberation Sans', sans-serif;letter-spacing:0.7px;">Segments</div><svg class="r" style="left:341px;top:467.9px;" width="5" height="8" viewBox="0 0 5 8"><path d="M0 0 L4.5 4 L0 8 Z" fill="#000"/></svg><div class="t" style="left:75.5px;top:485.73px;font-size:15.5px;line-height:22px;color:#000;font-family:'Liberation Sans', sans-serif;letter-spacing:0.7px;">Structs</div><svg class="r" style="left:341px;top:492.1px;" width="5" height="8" viewBox="0 0 5 8"><path d="M0 0 L4.5 4 L0 8 Z" fill="#000"/></svg><div class="t" style="left:75.5px;top:509.53px;font-size:15.5px;line-height:22px;color:#000;font-family:'Liberation Sans', sans-serif;letter-spacing:0.7px;">Functions</div><svg class="r" style="left:341px;top:515.9px;" width="5" height="8" viewBox="0 0 5 8"><path d="M0 0 L4.5 4 L0 8 Z" fill="#000"/></svg><div class="t" style="left:75.5px;top:533.73px;font-size:15.5px;line-height:22px;color:#000;font-family:'Liberation Sans', sans-serif;letter-spacing:0.7px;">Patch program</div><svg class="r" style="left:341px;top:540.1px;" width="5" height="8" viewBox="0 0 5 8"><path d="M0 0 L4.5 4 L0 8 Z" fill="#000"/></svg><div class="t" style="left:75.5px;top:557.53px;font-size:15.5px;line-height:22px;color:#000;font-family:'Liberation Sans', sans-serif;letter-spacing:0.7px;">Other</div><svg class="r" style="left:341px;top:563.9px;" width="5" height="8" viewBox="0 0 5 8"><path d="M0 0 L4.5 4 L0 8 Z" fill="#000"/></svg><div class="t" style="left:75.5px;top:581.63px;font-size:15.5px;line-height:22px;color:#000;font-family:'Liberation Sans', sans-serif;letter-spacing:0.7px;">Plugins</div><svg class="r" style="left:341px;top:588.0px;" width="5" height="8" viewBox="0 0 5 8"><path d="M0 0 L4.5 4 L0 8 Z" fill="#000"/></svg><div class="t" style="left:75.5px;top:605.43px;font-size:15.5px;line-height:22px;color:#000;font-family:'Liberation Sans', sans-serif;letter-spacing:0.7px;">Keypatch</div><svg class="r" style="left:341px;top:611.8px;" width="5" height="8" viewBox="0 0 5 8"><path d="M0 0 L4.5 4 L0 8 Z" fill="#000"/></svg><div class="r" style="left:36px;top:411px;width:318px;height:23px;background:transparent;box-sizing:border-box;border:2px solid #e3151e;"></div><div class="r" style="left:354.5px;top:411.5px;width:266.0px;height:263.5px;background:#f0f0f0;box-sizing:border-box;border:2px solid #f9f9f9;box-shadow:2px 2px 3px rgba(0,0,0,0.35);"></div><div class="r" style="left:384px;top:413.5px;width:2px;height:259.5px;background:#f9f9f9;"></div><div class="r" style="left:362px;top:445px;width:251px;height:18px;background:#0078d7;border-radius:4px;"></div><div class="t" style="left:390.5px;top:417.73px;font-size:15.5px;line-height:22px;color:#000;font-family:'Liberation Sans', sans-serif;letter-spacing:0.7px;">Offset</div><svg class="r" style="left:601px;top:424.1px;" width="5" height="8" viewBox="0 0 5 8"><path d="M0 0 L4.5 4 L0 8 Z" fill="#000"/></svg><div class="t" style="left:390.5px;top:443.63px;font-size:15.5px;line-height:22px;color:#000;font-family:'Liberation Sans', sans-serif;letter-spacing:0.7px;">Number</div><svg class="r" style="left:601px;top:450.0px;" width="5" height="8" viewBox="0 0 5 8"><path d="M0 0 L4.5 4 L0 8 Z" fill="#000"/></svg><div class="t" style="left:390.5px;top:469.73px;font-size:15.5px;line-height:22px;color:#000;font-family:'Liberation Sans', sans-serif;letter-spacing:0.7px;">Character</div><div class="t" style="left:552.5px;top:469.73px;font-size:15.5px;line-height:22px;color:#000;font-family:'Liberation Sans', sans-serif;letter-spacing:0.7px;">R</div><div class="t" style="left:390.5px;top:495.93px;font-size:15.5px;line-height:22px;color:#000;font-family:'Liberation Sans', sans-serif;letter-spacing:0.7px;">Segment</div><div class="t" style="left:552.5px;top:495.93px;font-size:15.5px;line-height:22px;color:#000;font-family:'Liberation Sans', sans-serif;letter-spacing:0.7px;">S</div><div class="t" style="left:390.5px;top:521.73px;font-size:15.5px;line-height:22px;color:#000;font-family:'Liberation Sans', sans-serif;letter-spacing:0.7px;">Enum member...</div><div class="t" style="left:552.5px;top:521.73px;font-size:15.5px;line-height:22px;color:#000;font-family:'Liberation Sans', sans-serif;letter-spacing:0.7px;">M</div><div class="t" style="left:390.5px;top:547.93px;font-size:15.5px;line-height:22px;color:#000;font-family:'Liberation Sans', sans-serif;letter-spacing:0.7px;">Stack variable</div><div class="t" style="left:552.5px;top:547.93px;font-size:15.5px;line-height:22px;color:#000;font-family:'Liberation Sans', sans-serif;letter-spacing:0.7px;">K</div><div class="t" style="left:390.5px;top:573.53px;font-size:15.5px;line-height:22px;color:#000;font-family:'Liberation Sans', sans-serif;letter-spacing:0.7px;">Change sign</div><div class="t" style="left:552.5px;top:573.53px;font-size:15.5px;line-height:22px;color:#000;font-family:'Liberation Sans', sans-serif;letter-spacing:0.7px;">_</div><div class="t" style="left:390.5px;top:599.73px;font-size:15.5px;line-height:22px;color:#000;font-family:'Liberation Sans', sans-serif;letter-spacing:0.7px;">Bitwise negate</div><div class="t" style="left:552.5px;top:599.73px;font-size:15.5px;line-height:22px;color:#000;font-family:'Liberation Sans', sans-serif;letter-spacing:0.7px;">~</div><div class="t" style="left:390.5px;top:625.63px;font-size:15.5px;line-height:22px;color:#000;font-family:'Liberation Sans', sans-serif;letter-spacing:0.7px;">Manual...</div><div class="t" style="left:552.5px;top:625.63px;font-size:15.5px;line-height:22px;color:#000;font-family:'Liberation Sans', sans-serif;letter-spacing:0.7px;">Alt+F1</div><div class="t" style="left:390.5px;top:650.13px;font-size:15.5px;line-height:22px;color:#000;font-family:'Liberation Sans', sans-serif;letter-spacing:0.7px;">Set operand type...</div><div class="r" style="left:353px;top:438px;width:256px;height:24px;background:transparent;box-sizing:border-box;border:2px solid #e3151e;"></div><div class="r" style="left:614.5px;top:441px;width:254.0px;height:196px;background:#f0f0f0;box-sizing:border-box;border:2px solid #f9f9f9;box-shadow:2px 2px 3px rgba(0,0,0,0.35);"></div><div class="r" style="left:644px;top:443px;width:2px;height:192px;background:#f9f9f9;"></div><div class="r" style="left:647px;top:604px;width:218px;height:1px;background:#d7d7d7;"></div><div class="t" style="left:650.5px;top:447.13px;font-size:15.5px;line-height:22px;color:#000;font-family:'Liberation Sans', sans-serif;letter-spacing:0.7px;">Number (default)</div><div class="t" style="left:835.5px;top:447.13px;font-size:15.5px;line-height:22px;color:#000;font-family:'Liberation Sans', sans-serif;letter-spacing:0.7px;">#</div><div class="t" style="left:650.5px;top:472.93px;font-size:15.5px;line-height:22px;color:#000;font-family:'Liberation Sans', sans-serif;letter-spacing:0.7px;">Hexadecimal</div><div class="t" style="left:835.5px;top:472.93px;font-size:15.5px;line-height:22px;color:#000;font-family:'Liberation Sans', sans-serif;letter-spacing:0.7px;">Q</div><div class="t" style="left:650.5px;top:498.73px;font-size:15.5px;line-height:22px;color:#000;font-family:'Liberation Sans', sans-serif;letter-spacing:0.7px;">Decimal</div><div class="t" style="left:835.5px;top:498.73px;font-size:15.5px;line-height:22px;color:#000;font-family:'Liberation Sans', sans-serif;letter-spacing:0.7px;">H</div><div class="t" style="left:650.5px;top:524.73px;font-size:15.5px;line-height:22px;color:#000;font-family:'Liberation Sans', sans-serif;letter-spacing:0.7px;">Octal</div><div class="t" style="left:650.5px;top:550.73px;font-size:15.5px;line-height:22px;color:#000;font-family:'Liberation Sans', sans-serif;letter-spacing:0.7px;">Binary</div><div class="t" style="left:835.5px;top:550.73px;font-size:15.5px;line-height:22px;color:#000;font-family:'Liberation Sans', sans-serif;letter-spacing:0.7px;">B</div><div class="t" style="left:650.5px;top:576.53px;font-size:15.5px;line-height:22px;color:#000;font-family:'Liberation Sans', sans-serif;letter-spacing:0.7px;">Floating point</div><div class="t" style="left:650.5px;top:612.03px;font-size:15.5px;line-height:22px;color:#000;font-family:'Liberation Sans', sans-serif;letter-spacing:0.7px;">Toggle leading zeroes</div><div class="r" style="left:609.5px;top:573px;width:168.0px;height:24.5px;background:transparent;box-sizing:border-box;border:2px solid #e3151e;"></div><svg class="r" style="left:44px;top:36px;" width="20" height="20" viewBox="0 0 20 20"><use href="#i_copy" width="20" height="20"/></svg><svg class="r" style="left:44px;top:224.1px;" width="20" height="20" viewBox="0 0 20 20"><use href="#i_code" width="20" height="20"/></svg><svg class="r" style="left:44px;top:249.89999999999998px;" width="20" height="20" viewBox="0 0 20 20"><use href="#i_data" width="20" height="20"/></svg><svg class="r" style="left:44px;top:276px;" width="20" height="20" viewBox="0 0 20 20"><use href="#i_struct" width="20" height="20"/></svg><svg class="r" style="left:44px;top:301.7px;" width="20" height="20" viewBox="0 0 20 20"><use href="#i_str" width="20" height="20"/></svg><svg class="r" style="left:44px;top:327.7px;" width="20" height="20" viewBox="0 0 20 20"><use href="#i_arr" width="20" height="20"/></svg><svg class="r" style="left:44px;top:353.4px;" width="20" height="20" viewBox="0 0 20 20"><use href="#i_undef" width="20" height="20"/></svg><svg class="r" style="left:44px;top:379.5px;" width="20" height="20" viewBox="0 0 20 20"><use href="#i_ren" width="20" height="20"/></svg><svg class="r" style="left:359px;top:418.1px;" width="20" height="20" viewBox="0 0 20 20"><use href="#o_offset" width="20" height="20"/></svg><svg class="r" style="left:359px;top:444.0px;" width="20" height="20" viewBox="0 0 20 20"><use href="#o_num" width="20" height="20"/></svg><svg class="r" style="left:359px;top:470.1px;" width="20" height="20" viewBox="0 0 20 20"><use href="#o_chr" width="20" height="20"/></svg><svg class="r" style="left:359px;top:496.3px;" width="20" height="20" viewBox="0 0 20 20"><use href="#o_seg" width="20" height="20"/></svg><svg class="r" style="left:359px;top:522.1px;" width="20" height="20" viewBox="0 0 20 20"><use href="#o_enum" width="20" height="20"/></svg><svg class="r" style="left:359px;top:548.3px;" width="20" height="20" viewBox="0 0 20 20"><use href="#o_stack" width="20" height="20"/></svg><svg class="r" style="left:359px;top:573.9px;" width="20" height="20" viewBox="0 0 20 20"><use href="#o_sign" width="20" height="20"/></svg><svg class="r" style="left:359px;top:600.1px;" width="20" height="20" viewBox="0 0 20 20"><use href="#o_neg" width="20" height="20"/></svg><svg class="r" style="left:359px;top:626.0px;" width="20" height="20" viewBox="0 0 20 20"><use href="#o_man" width="20" height="20"/></svg><svg class="r" style="left:619px;top:447px;" width="20" height="20" viewBox="0 0 20 20"><use href="#o_num" width="20" height="20"/></svg><svg class="r" style="left:619px;top:472.8px;" width="20" height="20" viewBox="0 0 20 20"><use href="#n_16" width="20" height="20"/></svg><svg class="r" style="left:619px;top:498.6px;" width="20" height="20" viewBox="0 0 20 20"><use href="#n_10" width="20" height="20"/></svg><svg class="r" style="left:619px;top:524.6px;" width="20" height="20" viewBox="0 0 20 20"><use href="#n_8" width="20" height="20"/></svg><svg class="r" style="left:619px;top:550.6px;" width="20" height="20" viewBox="0 0 20 20"><use href="#n_2" width="20" height="20"/></svg><svg class="r" style="left:619px;top:576.4px;" width="20" height="20" viewBox="0 0 20 20"><use href="#n_fl" width="20" height="20"/></svg><svg class="r" style="left:619px;top:611.9px;" width="20" height="20" viewBox="0 0 20 20"><use href="#n_tog" width="20" height="20"/></svg><svg class="r" style="left:436px;top:120px;" width="12" height="11" viewBox="0 0 12 11"><rect x="1.5" y="1.5" width="9" height="8" fill="none" stroke="#000" stroke-width="1.2"/><rect x="1.5" y="1.5" width="9" height="2" fill="#000"/></svg><svg class="r" style="left:464px;top:120px;" width="10" height="10" viewBox="0 0 10 10"><rect x="3.5" y="1.5" width="6" height="5" fill="none" stroke="#000" stroke-width="1.1"/><rect x="3.5" y="1.5" width="6" height="1.5" fill="#000"/><rect x="0.5" y="4.5" width="6" height="5" fill="#f0f0f0" stroke="#000" stroke-width="1.1"/><rect x="0.5" y="4.5" width="6" height="1.5" fill="#000"/></svg><svg class="r" style="left:491px;top:120px;" width="10" height="10" viewBox="0 0 10 10"><path d="M1 1L9 9M9 1L1 9" stroke="#000" stroke-width="1.4"/></svg><svg class="r" style="left:0px;top:115px;" width="18" height="18" viewBox="0 0 18 18"><use href="#fn" x="1" y="1" width="16" height="16"/></svg><div class="r" style="left:513px;top:111px;width:227px;height:27px;background:#f9f9f9;box-sizing:border-box;border-top:1px solid #e8e8e8;border-left:1px solid #e8e8e8;"></div><div class="r" style="left:740px;top:137.5px;width:444px;height:1px;background:#a8a8a8;"></div><div class="r" style="left:740px;top:113px;width:444px;height:1px;background:#e4e4e4;"></div><svg class="r" style="left:528px;top:116px;" width="16" height="16" viewBox="0 0 16 16"><use href="#tabicon" width="16" height="16"/></svg><div class="t" style="left:585px;top:117.84px;font-size:14.5px;line-height:20px;color:#000;font-family:'Liberation Mono', monospace;letter-spacing:-0.7px;">IDA View-A</div><svg class="r" style="left:706px;top:118.5px;" width="14" height="14" viewBox="0 0 14 14"><rect x="0.5" y="0.5" width="13" height="13" rx="2" fill="#e06a48" stroke="#c04a30"/><path d="M4 4L10 10M10 4L4 10" stroke="#fff" stroke-width="2"/></svg><svg class="r" style="left:754px;top:116px;" width="16" height="16" viewBox="0 0 16 16"><use href="#tabicon" width="16" height="16"/></svg><div class="t" style="left:802px;top:117.84px;font-size:14.5px;line-height:20px;color:#000;font-family:'Liberation Mono', monospace;letter-spacing:-0.7px;">Pseudocode-A</div><svg class="r" style="left:933px;top:118.5px;" width="14" height="14" viewBox="0 0 14 14"><rect x="0.5" y="0.5" width="13" height="13" rx="2" fill="#c4c4c4" stroke="#a8a8a8"/><path d="M4 4L10 10M10 4L4 10" stroke="#fff" stroke-width="2"/></svg><div class="r" style="left:965px;top:114px;width:1px;height:23px;background:#dcdcdc;"></div><svg class="r" style="left:981px;top:117px;" width="16" height="16" viewBox="0 0 16 16"><use href="#segicon" width="16" height="16"/></svg><div class="t" style="left:1001px;top:117.84px;font-size:14.5px;line-height:20px;color:#000;font-family:'Liberation Mono', monospace;letter-spacing:-0.7px;">Program Segmentation</div><svg class="r" style="left:1167px;top:118.5px;" width="14" height="14" viewBox="0 0 14 14"><rect x="0.5" y="0.5" width="13" height="13" rx="2" fill="#c4c4c4" stroke="#a8a8a8"/><path d="M4 4L10 10M10 4L4 10" stroke="#fff" stroke-width="2"/></svg><div class="r" style="left:3px;top:34px;width:1.2px;height:1.5px;background:#b4b4b4;"></div><div class="r" style="left:3px;top:37px;width:1.2px;height:1.5px;background:#b4b4b4;"></div><div class="r" style="left:3px;top:40px;width:1.2px;height:1.5px;background:#b4b4b4;"></div><div class="r" style="left:3px;top:43px;width:1.2px;height:1.5px;background:#b4b4b4;"></div><div class="r" style="left:3px;top:46px;width:1.2px;height:1.5px;background:#b4b4b4;"></div><div class="r" style="left:3px;top:49px;width:1.2px;height:1.5px;background:#b4b4b4;"></div><div class="r" style="left:3px;top:52px;width:1.2px;height:1.5px;background:#b4b4b4;"></div><svg class="r" style="left:13px;top:35px;" width="17" height="16" viewBox="0 0 17 16"><path d="M0.5 5.5h5l1.5 1.5h7v8h-13.5z" fill="#e8b830" stroke="#b08010"/><path d="M2 8.5h14.5l-2.5 7h-13.5z" fill="#ffe070" stroke="#c09020"/><path d="M8 4 C9 1.5 11 1 13 1.5 L13 0 L16 2.5 L13 5 L13 3.5 C11.5 3 10 3.5 8 4z" fill="#2a6ae8"/></svg><div class="r" style="left:37px;top:36px;width:2.5px;height:14px;background:#7a28f0;"></div><svg class="r" style="left:360px;top:37px;" width="14" height="14" viewBox="0 0 14 14"><circle cx="7" cy="7" r="6.5" fill="url(#rball)" stroke="#0a7a0a" stroke-width="0.8"/></svg><div class="r" style="left:380px;top:32px;width:1px;height:24px;background:#dcdcdc;"></div><div class="r" style="left:381px;top:32px;width:1px;height:24px;background:#fdfdfd;"></div><div class="r" style="left:385px;top:34px;width:1.2px;height:1.5px;background:#b4b4b4;"></div><div class="r" style="left:385px;top:37px;width:1.2px;height:1.5px;background:#b4b4b4;"></div><div class="r" style="left:385px;top:40px;width:1.2px;height:1.5px;background:#b4b4b4;"></div><div class="r" style="left:385px;top:43px;width:1.2px;height:1.5px;background:#b4b4b4;"></div><div class="r" style="left:385px;top:46px;width:1.2px;height:1.5px;background:#b4b4b4;"></div><div class="r" style="left:385px;top:49px;width:1.2px;height:1.5px;background:#b4b4b4;"></div><div class="r" style="left:385px;top:52px;width:1.2px;height:1.5px;background:#b4b4b4;"></div><svg class="r" style="left:395px;top:35px;" width="18" height="18" viewBox="0 0 18 18"><use href="#i_code" width="18" height="18"/></svg><svg class="r" style="left:417px;top:35px;" width="18" height="18" viewBox="0 0 18 18"><use href="#i_data" width="18" height="18"/></svg><svg class="r" style="left:439px;top:35px;" width="18" height="18" viewBox="0 0 18 18"><use href="#i_struct" width="18" height="18"/></svg><svg class="r" style="left:461px;top:35px;" width="18" height="18" viewBox="0 0 18 18"><use href="#i_str" width="18" height="18"/></svg><svg class="r" style="left:487px;top:42px;" width="10" height="6" viewBox="0 0 10 6"><path d="M0 0h10l-5 5.5z" fill="#000"/></svg><svg class="r" style="left:500px;top:35px;" width="18" height="18" viewBox="0 0 18 18"><use href="#i_arr" width="18" height="18"/></svg><svg class="r" style="left:525px;top:35px;" width="18" height="18" viewBox="0 0 18 18"><use href="#i_ren" width="18" height="18"/></svg><svg class="r" style="left:548px;top:36px;" width="17" height="17" viewBox="0 0 17 17"><use href="#i_undef" width="17" height="17"/></svg><div class="r" style="left:570px;top:32px;width:1px;height:24px;background:#dcdcdc;"></div><div class="r" style="left:571px;top:32px;width:1px;height:24px;background:#fdfdfd;"></div><div class="r" style="left:576px;top:34px;width:1.2px;height:1.5px;background:#b4b4b4;"></div><div class="r" style="left:576px;top:37px;width:1.2px;height:1.5px;background:#b4b4b4;"></div><div class="r" style="left:576px;top:40px;width:1.2px;height:1.5px;background:#b4b4b4;"></div><div class="r" style="left:576px;top:43px;width:1.2px;height:1.5px;background:#b4b4b4;"></div><div class="r" style="left:576px;top:46px;width:1.2px;height:1.5px;background:#b4b4b4;"></div><div class="r" style="left:576px;top:49px;width:1.2px;height:1.5px;background:#b4b4b4;"></div><div class="r" style="left:576px;top:52px;width:1.2px;height:1.5px;background:#b4b4b4;"></div><svg class="r" style="left:589px;top:37px;" width="12" height="14" viewBox="0 0 12 14"><path d="M1 1 L11 7 L1 13z" fill="#b0b0b0" stroke="#808080"/></svg><svg class="r" style="left:610px;top:36px;" width="16" height="16" viewBox="0 0 16 16"><rect x="0.5" y="0.5" width="15" height="15" rx="3" fill="#a8a8a8" stroke="#707070"/><rect x="5" y="4" width="2" height="8" fill="#fff"/><rect x="9" y="4" width="2" height="8" fill="#fff"/></svg><svg class="r" style="left:632px;top:36px;" width="16" height="16" viewBox="0 0 16 16"><rect x="0.5" y="0.5" width="15" height="15" rx="3" fill="#a8a8a8" stroke="#707070"/><rect x="4" y="4" width="8" height="8" fill="#fff" stroke="#888" stroke-width="0.6"/></svg><div class="r" style="left:652.5px;top:33.5px;width:229px;height:20.5px;background:#ffffff;box-sizing:border-box;border:1px solid #c8c8c8;border-radius:3px;"></div><div class="t" style="left:656px;top:34.74px;font-size:14.5px;line-height:20px;color:#000;font-family:'Liberation Mono', monospace;letter-spacing:-0.75px;">No debugger</div><svg class="r" style="left:868px;top:41px;" width="9" height="5" viewBox="0 0 9 5"><path d="M0 0h9l-4.5 5z" fill="#000"/></svg><div class="r" style="left:886px;top:32px;width:1px;height:24px;background:#dcdcdc;"></div><div class="r" style="left:887px;top:32px;width:1px;height:24px;background:#fdfdfd;"></div><svg class="r" style="left:891px;top:35px;" width="18" height="18" viewBox="0 0 18 18"><path d="M1 4 L6 1.5 L6 3 H10 V7 H6 V8.5z" fill="#909090"/><rect x="6.5" y="7.5" width="10" height="10" fill="#f0f0f0" stroke="#909090"/><text x="11.5" y="16" font-family="Liberation Sans" font-size="9" font-weight="bold" fill="#505050" text-anchor="middle">C</text></svg><div class="r" style="left:912px;top:33px;width:21px;height:21px;background:#cce4f7;box-sizing:border-box;border:1px solid #99c8ef;border-radius:2px;"></div><svg class="r" style="left:913px;top:35px;" width="18" height="18" viewBox="0 0 18 18"><rect x="1.5" y="7.5" width="10" height="10" fill="#f8f8f8" stroke="#404060"/><text x="6.5" y="16" font-family="Liberation Sans" font-size="9" font-weight="bold" fill="#1a2a80" text-anchor="middle">C</text><path d="M9 1 L17 6 L9 11z" fill="#20b030" stroke="#0a700a" stroke-width="0.6"/></svg><div class="r" style="left:936px;top:32px;width:1px;height:24px;background:#dcdcdc;"></div><div class="r" style="left:937px;top:32px;width:1px;height:24px;background:#fdfdfd;"></div><div class="r" style="left:941px;top:34px;width:1.2px;height:1.5px;background:#b4b4b4;"></div><div class="r" style="left:941px;top:37px;width:1.2px;height:1.5px;background:#b4b4b4;"></div><div class="r" style="left:941px;top:40px;width:1.2px;height:1.5px;background:#b4b4b4;"></div><div class="r" style="left:941px;top:43px;width:1.2px;height:1.5px;background:#b4b4b4;"></div><div class="r" style="left:941px;top:46px;width:1.2px;height:1.5px;background:#b4b4b4;"></div><div class="r" style="left:941px;top:49px;width:1.2px;height:1.5px;background:#b4b4b4;"></div><div class="r" style="left:941px;top:52px;width:1.2px;height:1.5px;background:#b4b4b4;"></div><svg class="r" style="left:952px;top:35px;" width="17" height="17" viewBox="0 0 17 17"><rect x="0.5" y="3.5" width="14" height="13" fill="#e8f0fa" stroke="#2a50b0"/><path d="M3 7h6M3 9.5h6M3 12h6" stroke="#2a50b0" stroke-width="1.2"/><rect x="9" y="6" width="3" height="9" fill="#555"/><circle cx="11" cy="4" r="3.5" fill="#e82020"/></svg><svg class="r" style="left:974px;top:35px;" width="17" height="17" viewBox="0 0 17 17"><circle cx="5" cy="5" r="4.5" fill="#8a8a8a"/><circle cx="4" cy="3.8" r="1.6" fill="#c8c8c8"/><rect x="2.5" y="8" width="5" height="9" fill="#7a7a7a"/><rect x="2.5" y="11.5" width="5" height="1.2" fill="#b0b0b0"/><path d="M10.5 5.5h6.5M13.75 2.2v6.6" stroke="#808080" stroke-width="2.4"/></svg><svg class="r" style="left:996px;top:35px;" width="17" height="17" viewBox="0 0 17 17"><circle cx="5" cy="5" r="4.5" fill="#8a8a8a"/><circle cx="4" cy="3.8" r="1.6" fill="#c8c8c8"/><rect x="2.5" y="8" width="5" height="9" fill="#7a7a7a"/><rect x="2.5" y="11.5" width="5" height="1.2" fill="#b0b0b0"/><path d="M10 1.5l6 6M16 1.5l-6 6" stroke="#909090" stroke-width="1.5"/></svg>
</body></html>
